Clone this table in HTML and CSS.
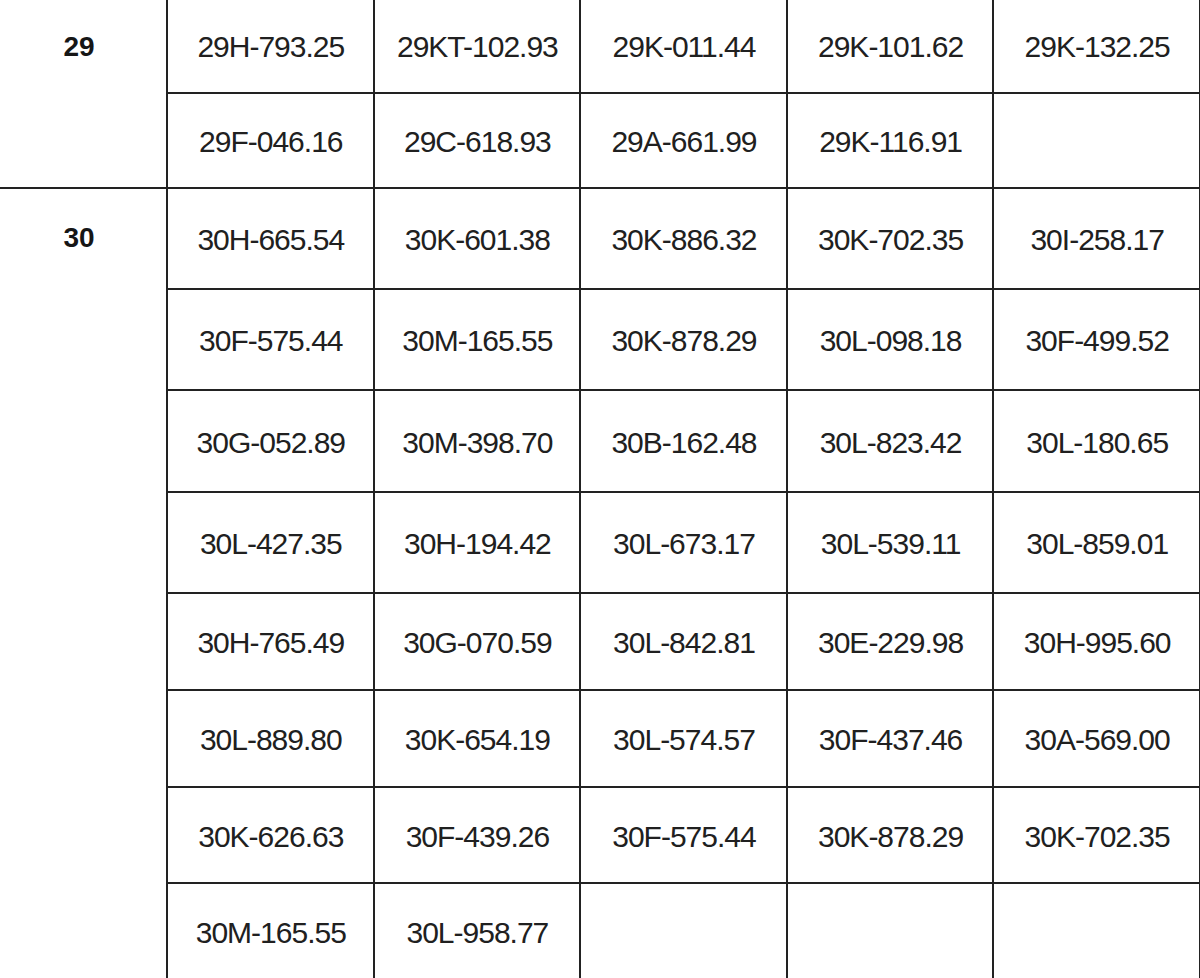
FILE: index.html
```html
<!DOCTYPE html>
<html>
<head>
<meta charset="utf-8">
<link rel="stylesheet" href="styles.css">
</head>
<body>
<table class="plates">
  <colgroup>
    <col class="c-group">
    <col class="c-plate">
    <col class="c-plate">
    <col class="c-plate">
    <col class="c-plate">
    <col class="c-plate">
  </colgroup>
  <tbody>
    <tr class="h96">
      <td class="group" rowspan="2">29</td>
      <td>29H-793.25</td><td>29KT-102.93</td><td>29K-011.44</td><td>29K-101.62</td><td>29K-132.25</td>
    </tr>
    <tr class="h95">
      <td>29F-046.16</td><td>29C-618.93</td><td>29A-661.99</td><td>29K-116.91</td><td></td>
    </tr>
    <tr class="h101">
      <td class="group" rowspan="8">30</td>
      <td>30H-665.54</td><td>30K-601.38</td><td>30K-886.32</td><td>30K-702.35</td><td>30I-258.17</td>
    </tr>
    <tr class="h101">
      <td>30F-575.44</td><td>30M-165.55</td><td>30K-878.29</td><td>30L-098.18</td><td>30F-499.52</td>
    </tr>
    <tr class="h102">
      <td>30G-052.89</td><td>30M-398.70</td><td>30B-162.48</td><td>30L-823.42</td><td>30L-180.65</td>
    </tr>
    <tr class="h101">
      <td>30L-427.35</td><td>30H-194.42</td><td>30L-673.17</td><td>30L-539.11</td><td>30L-859.01</td>
    </tr>
    <tr class="h97">
      <td>30H-765.49</td><td>30G-070.59</td><td>30L-842.81</td><td>30E-229.98</td><td>30H-995.60</td>
    </tr>
    <tr class="h97">
      <td>30L-889.80</td><td>30K-654.19</td><td>30L-574.57</td><td>30F-437.46</td><td>30A-569.00</td>
    </tr>
    <tr class="h96">
      <td>30K-626.63</td><td>30F-439.26</td><td>30F-575.44</td><td>30K-878.29</td><td>30K-702.35</td>
    </tr>
    <tr class="h96">
      <td>30M-165.55</td><td>30L-958.77</td><td></td><td></td><td></td>
    </tr>
  </tbody>
</table>
</body>
</html>
```

FILE: styles.css
```css
html, body {
  margin: 0;
  padding: 0;
  background: #ffffff;
}

body {
  overflow: hidden;
  font-family: "Liberation Sans", Arial, sans-serif;
}

.plates {
  border-collapse: collapse;
  table-layout: fixed;
  width: 1209px;
  margin: -4px 0 0 -10px;
}

.c-group { width: 176px; }
.c-plate { width: 206.6px; }

.plates td {
  border: 2px solid #222222;
  text-align: center;
  vertical-align: middle;
  padding: 3px 0 0 1px;
  font-size: 30px;
  color: #202020;
  white-space: nowrap;
  letter-spacing: -1px;
}

.plates td.group {
  font-size: 28px;
  font-weight: bold;
  letter-spacing: 0;
  vertical-align: top;
  padding: 33px 0 0 0;
  color: #161616;
}

.h95 { height: 95px; }
.h96 { height: 96px; }
.h97 { height: 97px; }
.h101 { height: 101px; }
.h102 { height: 102px; }
```
